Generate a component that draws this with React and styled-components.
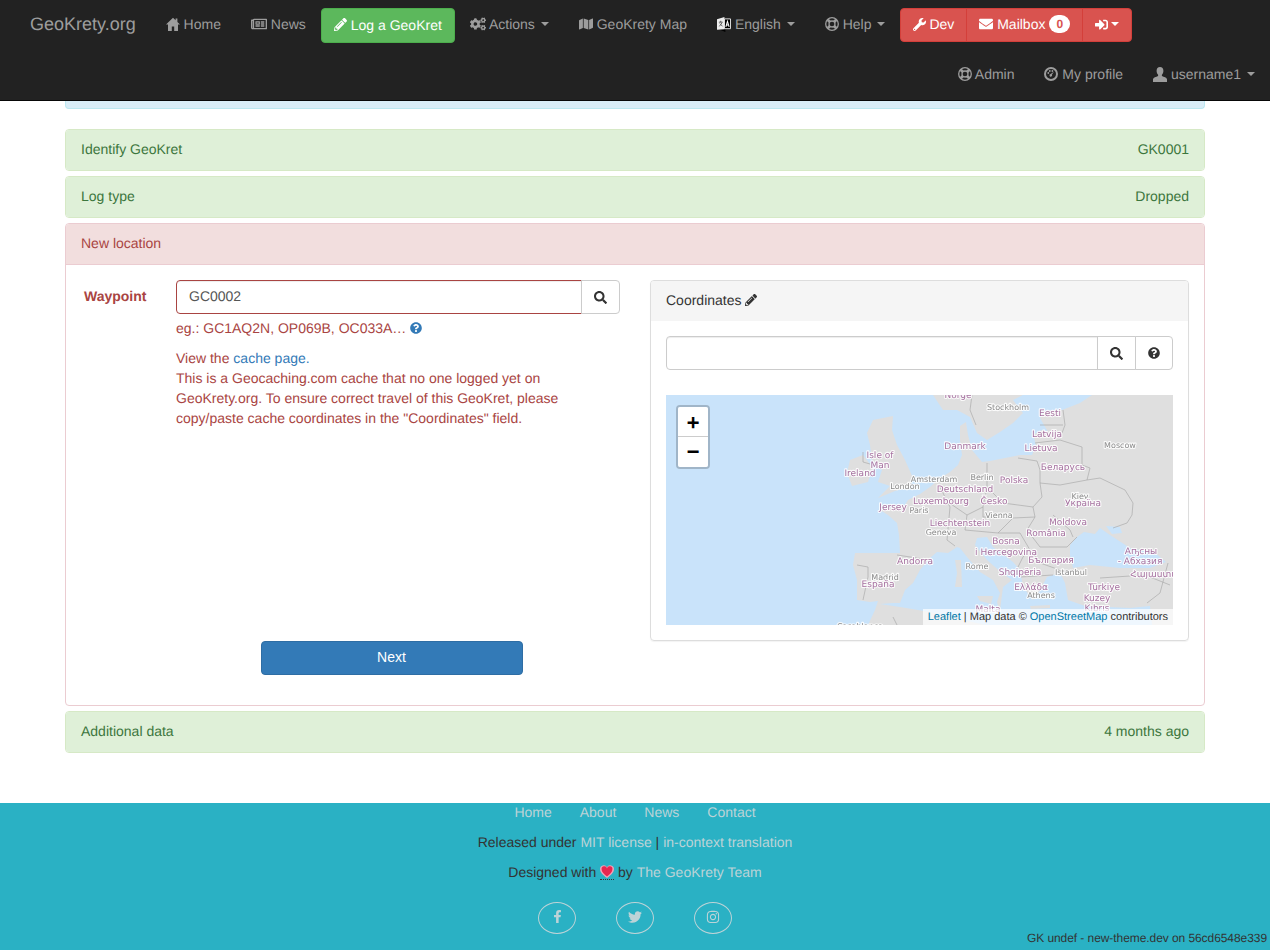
import React from 'react'
import styled, { createGlobalStyle } from 'styled-components'
import {
  FaRegNewspaper, FaPencilAlt, FaCogs, FaMap, FaWrench,
  FaEnvelope, FaSignInAlt, FaSearch, FaQuestionCircle, FaFacebookF, FaTwitter, FaInstagram,
} from 'react-icons/fa'

const GlobalStyle = createGlobalStyle`
  html, body { margin: 0; height: 950px; overflow: hidden; background: #fff; }
  body { font-family: "Liberation Sans", Arial, sans-serif; font-size: 14px; line-height: 20px; color: #333; text-rendering: geometricPrecision; }
  * { box-sizing: border-box; }
  a { text-decoration: none; }
`

const Page = styled.div`
  width: 1270px;
  height: 950px;
  display: flex;
  flex-direction: column;
  position: relative;
`

const Navbar = styled.nav`
  height: 101px;
  background: #222;
  border-bottom: 1px solid #080808;
  padding-left: 15px;
`

const NavRow = styled.div`
  height: 50px;
  display: flex;
  align-items: flex-start;
  justify-content: ${p => (p.$right ? 'flex-end' : 'flex-start')};
`

const Brand = styled.a`
  font-size: 18px;
  line-height: 20px;
  color: #9d9d9d;
  padding: 14px 15px 16px 15px;
`

const NavLink = styled.a`
  display: flex;
  align-items: center;
  height: 50px;
  padding: 0 15px 2px;
  color: #9d9d9d;
  white-space: pre;
  svg { flex: none; }
`

const LogButton = styled.a`
  display: flex;
  align-items: center;
  height: 35px;
  margin-top: 8px;
  padding: 0 12px 2px;
  color: #fff;
  background: #5cb85c;
  border: 1px solid #4cae4c;
  border-radius: 4px;
  white-space: pre;
`

const DevGroup = styled.div`
  display: flex;
  margin-top: 8px;
`

const DevButton = styled.a`
  display: flex;
  align-items: center;
  height: 34px;
  padding: 0 12px 2px;
  color: #fff;
  background: #d9534f;
  border: 1px solid #d43f3a;
  margin-left: -1px;
  white-space: pre;
  &:first-child { border-radius: 4px 0 0 4px; margin-left: 0; }
  &:last-child { border-radius: 0 4px 4px 0; }
`

const Badge = styled.span`
  min-width: 21px;
  height: 18px;
  margin-left: 4px;
  background: #fff;
  color: #d9534f;
  border-radius: 10px;
  font-size: 12px;
  font-weight: 700;
  line-height: 18px;
  text-align: center;
`

const Caret = styled.span`
  display: inline-block;
  width: 0;
  height: 0;
  margin-left: ${p => p.$gap ?? 6}px;
  border-top: 4px dashed currentColor;
  border-left: 4px solid transparent;
  border-right: 4px solid transparent;
`

const Container = styled.main`
  width: 1140px;
  margin: 0 auto 45px;
`

const ClippedPanel = styled.div`
  height: 8px;
  margin-bottom: 20px;
  background: #d9edf7;
  border: 1px solid #bce8f1;
  border-top: 0;
  border-radius: 0 0 4px 4px;
`

const Panel = styled.section`
  margin-bottom: 5px;
  border: 1px solid ${p => (p.$danger ? '#ebccd1' : '#d6e9c6')};
  border-radius: 4px;
  background: #fff;
  overflow: hidden;
`

const PanelHeading = styled.div`
  height: ${p => (p.$danger ? 41 : 40)}px;
  padding: 0 15px 2px;
  display: flex;
  align-items: center;
  justify-content: space-between;
  background: ${p => (p.$danger ? '#f2dede' : '#dff0d8')};
  color: ${p => (p.$danger ? '#a94442' : '#3c763d')};
  border-bottom: ${p => (p.$danger ? '1px solid #ebccd1' : '0')};
`

const PanelBody = styled.div`
  height: 440px;
  padding: 15px 15px 30px;
  display: grid;
  grid-template-columns: 539px 539px;
  gap: 30px;
`

const FormColumn = styled.div`
  display: flex;
  flex-direction: column;
  min-height: 395px;
`

const WaypointRow = styled.div`
  display: grid;
  grid-template-columns: 95px 444px;
`

const WaypointLabel = styled.label`
  color: #a94442;
  font-weight: 700;
  padding: 6px 0 0 3px;
`

const InputGroup = styled.div`
  display: flex;
  height: 34px;
`

const TextInput = styled.div`
  flex: 1;
  height: 34px;
  padding: 5px 12px;
  color: #555;
  background: #fff;
  border: 1px solid ${p => (p.$error ? '#a94442' : '#ccc')};
  border-radius: 4px 0 0 4px;
  box-shadow: inset 0 1px 1px rgba(0, 0, 0, .075);
`

const AddonButton = styled.button`
  width: ${p => p.$w}px;
  height: 34px;
  margin-left: -1px;
  padding: 0;
  display: flex;
  align-items: center;
  justify-content: center;
  color: #333;
  background: #fff;
  border: 1px solid #ccc;
  &:last-child { border-radius: 0 4px 4px 0; }
`

const HelpLine = styled.div`
  margin-top: 4px;
  color: #a94442;
  display: flex;
  align-items: center;
  white-space: pre;
  svg { color: #337ab7; margin-left: 4px; }
`

const Message = styled.p`
  margin: 10px 0 0;
  color: #a94442;
  a { color: #337ab7; }
`

const NextButton = styled.button`
  align-self: center;
  margin-top: auto;
  width: 262px;
  height: 34px;
  margin-left: 82px;
  padding: 0 0 2px;
  color: #fff;
  background: #337ab7;
  border: 1px solid #2e6da4;
  border-radius: 4px;
  font: inherit;
`

const CoordPanel = styled.div`
  height: 361px;
  border: 1px solid #ddd;
  border-radius: 4px;
  box-shadow: 0 1px 1px rgba(0, 0, 0, .05);
  overflow: hidden;
`

const CoordHeading = styled.div`
  height: 40px;
  padding: 0 15px 2px;
  display: flex;
  align-items: center;
  white-space: pre;
  background: #f5f5f5;
`

const CoordBody = styled.div`
  padding: 15px;
  display: flex;
  flex-direction: column;
  gap: 25px;
`

const MapFrame = styled.div`
  position: relative;
  height: 230px;
  overflow: hidden;
  background: #c9e3fa;
  svg.tiles { display: block; filter: blur(.3px); }
`

const ZoomControl = styled.div`
  position: absolute;
  left: 10px;
  top: 10px;
  width: 34px;
  border: 2px solid rgba(0, 0, 0, .2);
  border-radius: 4px;
  background-clip: padding-box;
`

const ZoomButton = styled.div`
  height: 30px;
  padding-top: ${p => (p.$top ? 7 : 4)}px;
  background: #fff;
  display: flex;
  align-items: center;
  justify-content: center;
  color: #000;
  font: 700 22px/26px "Liberation Mono", "Courier New", monospace;
  border-radius: ${p => (p.$top ? '2px 2px 0 0' : '0 0 2px 2px')};
  border-bottom: ${p => (p.$top ? '1px solid #ccc' : '0')};
`

const Attribution = styled.div`
  position: absolute;
  right: 0;
  bottom: 0;
  padding: 0 5px;
  background: rgba(255, 255, 255, .7);
  font-size: 11px;
  line-height: 16px;
  color: #333;
  a { color: #0078a8; }
`

const Footer = styled.footer`
  flex: 1;
  background: #2ab1c4;
  text-align: center;
  a { color: #bcd3d7; }
`

const FooterLinks = styled.div`
  height: 19px;
  display: flex;
  justify-content: center;
  gap: 28px;
  line-height: 18px;
`

const FooterLine = styled.div`
  height: 20px;
  margin-top: ${p => p.$top}px;
  white-space: pre;
  display: flex;
  justify-content: center;
  align-items: center;
`

const HeartMark = styled.span`
  display: inline-flex;
  height: 15px;
  align-items: center;
  border-bottom: 1px dotted #333;
`

const SocialRow = styled.div`
  display: flex;
  justify-content: center;
  gap: 40px;
  margin-top: 20px;
`

const SocialLink = styled.a`
  width: 38px;
  height: 32px;
  display: flex;
  align-items: center;
  justify-content: center;
  border: 1px solid #bcd3d7;
  border-radius: 50%;
  svg { margin-top: -3px; }
`

const BuildInfo = styled.div`
  position: absolute;
  right: 3px;
  bottom: 5px;
  font-size: 12px;
  line-height: 14px;
  letter-spacing: -.07px;
  color: #333;
`

// glyphicon look-alikes, react-icons has no such shapes
const HomeIcon = () => (
  <svg width="14" height="14" viewBox="0 0 14 14" fill="currentColor">
    <path d="M7 .8 0 7.600h2V14h3.800V9.600h2.400V14H12V7.600h2l-2.600-2.500V1.400H9.600v1.900z" />
  </svg>
)

const RingIcon = () => (
  <svg width="14" height="14" viewBox="0 0 14 14" fill="none" stroke="currentColor">
    <circle cx="7" cy="7" r="6.300" strokeWidth="1.300" />
    <circle cx="7" cy="7" r="3" strokeWidth="1.300" />
    <path strokeWidth="2.800" d="M2.700 2.700 5 5M11.300 2.700 9 5M2.700 11.300 5 9M11.300 11.300 9 9" />
  </svg>
)

const LanguageIcon = () => (
  <svg width="14" height="15" viewBox="0 0 15 16">
    <path fill="#000" d="M2 13h7v3z" />
    <path fill="#eee" d="M0 2.500 8 0v13l-8 .6z" />
    <path fill="none" stroke="#555" strokeWidth="1" d="M2 5.500h4M4 4v1.500M2.500 10 5.500 6M3 7l3 3" />
    <path fill="#000" stroke="#eee" d="M8 2h6.500v10.500H8z" />
    <path fill="none" stroke="#fff" strokeWidth="1.100" d="M9.500 10.500 11.200 4.500 13 10.500M10.200 8.500h2" />
  </svg>
)

const UserIcon = () => (
  <svg width="14" height="15" viewBox="0 0 14 15" fill="currentColor">
    <path d="M7 0C4.800 0 3.600 1.600 3.600 3.800c0 1.600.6 3 1.500 3.900v1.400C3 10 .4 10.600 0 12.200V15h14v-2.800c-.4-1.600-3-2.200-5.100-3.100V7.700c.9-.9 1.500-2.300 1.500-3.900C10.400 1.600 9.200 0 7 0z" />
  </svg>
)

const DashIcon = () => (
  <svg width="14" height="14" viewBox="0 0 14 14" fill="currentColor">
    <path fillRule="evenodd" d="M7 0a7 7 0 1 1 0 14A7 7 0 0 1 7 0zm0 2a5 5 0 1 0 0 10A5 5 0 0 0 7 2z" />
    <circle cx="4.300" cy="6" r=".9" /><circle cx="5.800" cy="4" r=".9" /><circle cx="8.400" cy="4" r=".9" />
    <path d="M9.900 4.800 7.900 7.700a1.300 1.300 0 1 1-1.300-.6z" />
  </svg>
)

const Heart = () => (
  <svg width="14" height="13" viewBox="0 0 14 13">
    <path fill="#f2a3b8" d="M7 13C3 10 0 7.500 0 4a3.700 3.700 0 0 1 7-1.700A3.700 3.700 0 0 1 14 4c0 3.500-3 6-7 9z" />
    <path fill="#e8264f" d="M7 11.500C4 9.200 1.600 7.200 1.600 4.300A2.600 2.600 0 0 1 7 3.600a2.600 2.600 0 0 1 5.400.7c0 2.900-2.400 4.900-5.400 7.200z" />
  </svg>
)

const landPaths = [
  // continent, seas are painted over it
  'M880 510L893 507 905 505 908 500 920 494 930 487 940 478 950 472 958 465 962 455 960 440 960 426 966 422 968 435 972 450 982 462 990 461 1005 458 1020 455 1032 455 1036 445 1033 435 1042 430 1048 432 1040 418 1045 411 1062 410 1080 403 1092 395 1173 395 1173 625 868 625 875 610 878 601 870 602 857 600 857 580 853 565 855 553 885 553 900 553 899 535 897 523 888 515Z',
  // Scandinavia
  'M933 395L943 410 957 410 970 417 977 433 987 440 1000 432 1013 423 1023 413 1013 400 1023 395Z',
  // Great Britain
  'M867 433L873 420 893 416 892 430 897 445 905 460 913 478 910 487 895 491 878 498 890 486 878 482 882 470 872 460 870 445Z',
  // Ireland
  'M850 460L863 455 873 468 868 482 852 486 847 473Z',
]

const seaPaths = [
  // western Mediterranean with Italy's west coast
  'M880 604L893 603 900 603 905 590 913 583 920 570 930 558 937 552 948 553 957 547 960 548 967 557 980 572 993 580 1000 593 997 602 1000 612 985 625 930 612 900 607Z',
  // Adriatic
  'M977 538L987 537 993 547 1013 562 1020 570 1023 587 1033 600 1040 590 1047 577 1060 573 1065 583 1068 600 1085 606 1130 608 1150 606 1152 625 985 625 1000 610 1003 587 1012 580 1002 573 987 560 975 545Z',
  // Black Sea
  'M1077 537L1084 532 1095 534 1100 528 1110 535 1130 548 1155 553 1166 562 1150 568 1120 568 1090 565 1073 568 1070 555 1070 545Z',
  // Azov
  'M1106 526L1120 527 1122 533 1112 534Z',
  // Gulf of Bothnia corner
  'M1023 395L1090 395 1076 402 1050 404 1034 404 1028 412 1018 399Z',
]

// islands sit on top of the seas
const islandPaths = [
  'M955 560L961 560 962 587 955 587 957 573Z',
  'M977 596L993 596 991 604 980 601Z',
  'M1030 606L1050 605 1050 608 1031 609Z',
]

const borders = [
  '1063 410 1065 425 1062 433', '1040 425 1063 425', '1035 443 1060 440 1082 447 1082 465 1090 468 1087 480',
  '1040 483 1060 485 1087 480 1100 478 1125 490 1133 503 1132 515 1127 523 1113 528',
  '1018 458 1037 461 1040 470 1040 483 1042 497 1033 507', '987 463 987 487 1003 503 1033 507',
  '983 507 967 515', '987 487 983 507 983 517 1013 518 1035 517 1033 507', '1035 517 1027 530 1040 547 1067 547 1077 537',
  '1053 515 1070 530 1073 537', '940 487 950 507 947 540 955 546', '897 555 930 560', '857 565 868 567 868 577 863 600',
  '863 452 863 462 870 464', '893 617 897 625', '972 395 970 410 976 425', '998 533 1020 533 1030 550 1023 557 1018 567',
  '1020 577 1053 575', '1060 570 1040 563 1030 550', '1160 593 1147 603', '1168 563 1160 593', '965 530 998 533 1013 518',
  '1100 578 1145 575 1170 585', '945 500 967 515 965 530',
]

const countries = [
  ['Norge', 958, 396], ['Eesti', 1050, 414], ['Latvija', 1047, 435], ['Lietuva', 1041, 449], ['Danmark', 965, 447],
  ['Беларусь', 1063, 468], ['Polska', 1014, 481], ['Deutschland', 965, 490], ['Česko', 994, 502], ['Luxembourg', 941, 502],
  ['Україна', 1083, 504], ['Moldova', 1068, 523], ['România', 1046, 534], ['Liechtenstein', 960, 524], ['Bosna', 1006, 542],
  ['i Hercegovina', 1006, 553], ['България', 1051, 561], ['Shqipëria', 1020, 573], ['Ελλάδα', 1031, 588], ['Türkiye', 1104, 588],
  ['Kuzey', 1097, 599], ['Kıbrıs', 1097, 609], ['Malta', 988, 610], ['Аҧсны', 1141, 552], ['- Абхазия', 1140, 562],
  ['Հայաստան', 1158, 575], ['Andorra', 915, 562], ['Isle of', 880, 456], ['Man', 880, 466], ['Ireland', 860, 474],
  ['Jersey', 893, 508], ['España', 878, 585],
]

const cities = [
  ['Stockholm', 1008, 407], ['Moscow', 1120, 445], ['Berlin', 982, 477], ['Amsterdam', 934, 479], ['London', 905, 486],
  ['Paris', 919, 510], ['Kiev', 1080, 496], ['Vienna', 999, 515], ['Geneva', 941, 532], ['Rome', 977, 566],
  ['Istanbul', 1071, 572], ['Athens', 1041, 595], ['Madrid', 885, 577], ['Casablanca', 860, 626],
]

const MapTiles = () => (
  <svg className="tiles" width="507" height="230" viewBox="666 395 507 230">
    {landPaths.map(d => <path key={d} d={d} fill="#dfdfdf" />)}
    {seaPaths.map(d => <path key={d} d={d} fill="#c9e3fa" />)}
    {islandPaths.map(d => <path key={d} d={d} fill="#dfdfdf" />)}
    {borders.map(p => <polyline key={p} points={p} fill="none" stroke="#a2a2a2" strokeWidth=".6" />)}
    <g fontFamily="'DejaVu Sans', sans-serif" textAnchor="middle" dominantBaseline="central" stroke="#fff" strokeWidth="2.200" strokeOpacity=".85" paintOrder="stroke" strokeLinejoin="round">
      {cities.map(([t, x, y]) => <text key={t} x={x} y={y} fontSize="8" fill="#8a8a8a">{t}</text>)}
      {countries.map(([t, x, y]) => <text key={t} x={x} y={y} fontSize="9" fill="#a5709f">{t}</text>)}
    </g>
  </svg>
)

export default function App() {
  return (
    <Page>
      <GlobalStyle />
      <Navbar>
        <NavRow>
          <Brand href="#">GeoKrety.org</Brand>
          <NavLink href="#"><HomeIcon /> Home</NavLink>
          <NavLink href="#"><FaRegNewspaper size={16} /> News</NavLink>
          <LogButton href="#"><FaPencilAlt size={13} /> Log a GeoKret</LogButton>
          <NavLink href="#"><FaCogs size={16} /> Actions<Caret /></NavLink>
          <NavLink href="#"><FaMap size={14} /> GeoKrety Map</NavLink>
          <NavLink href="#"><LanguageIcon /> English<Caret /></NavLink>
          <NavLink href="#"><RingIcon /> Help<Caret $gap={5} /></NavLink>
          <DevGroup>
            <DevButton href="#"><FaWrench size={13} /> Dev</DevButton>
            <DevButton href="#"><FaEnvelope size={14} /> Mailbox<Badge>0</Badge></DevButton>
            <DevButton href="#"><FaSignInAlt size={13} /><Caret $gap={3} /></DevButton>
          </DevGroup>
        </NavRow>
        <NavRow $right>
          <NavLink href="#"><RingIcon /> Admin</NavLink>
          <NavLink href="#"><DashIcon /> My profile</NavLink>
          <NavLink href="#"><UserIcon /> username1<Caret /></NavLink>
        </NavRow>
      </Navbar>

      <Container>
        <ClippedPanel />
        <Panel>
          <PanelHeading><span>Identify GeoKret</span><span>GK0001</span></PanelHeading>
        </Panel>
        <Panel>
          <PanelHeading><span>Log type</span><span>Dropped</span></PanelHeading>
        </Panel>
        <Panel $danger>
          <PanelHeading $danger><span>New location</span></PanelHeading>
          <PanelBody>
            <FormColumn>
              <WaypointRow>
                <WaypointLabel>Waypoint</WaypointLabel>
                <div>
                  <InputGroup>
                    <TextInput $error>GC0002</TextInput>
                    <AddonButton $w={39}><FaSearch size={13} /></AddonButton>
                  </InputGroup>
                  <HelpLine>eg.: GC1AQ2N, OP069B, OC033A…<FaQuestionCircle size={12} /></HelpLine>
                  <Message>
                    View the <a href="#">cache page.</a><br />
                    This is a Geocaching.com cache that no one logged yet on GeoKrety.org. To ensure correct travel of this GeoKret, please copy/paste cache coordinates in the "Coordinates" field.
                  </Message>
                </div>
              </WaypointRow>
              <NextButton>Next</NextButton>
            </FormColumn>
            <CoordPanel>
              <CoordHeading>Coordinates <FaPencilAlt size={12} /></CoordHeading>
              <CoordBody>
                <InputGroup>
                  <TextInput />
                  <AddonButton $w={39}><FaSearch size={13} /></AddonButton>
                  <AddonButton $w={38}><FaQuestionCircle size={12} /></AddonButton>
                </InputGroup>
                <MapFrame>
                  <MapTiles />
                  <ZoomControl>
                    <ZoomButton $top>+</ZoomButton>
                    <ZoomButton>−</ZoomButton>
                  </ZoomControl>
                  <Attribution><a href="#">Leaflet</a> | Map data © <a href="#">OpenStreetMap</a> contributors</Attribution>
                </MapFrame>
              </CoordBody>
            </CoordPanel>
          </PanelBody>
        </Panel>
        <Panel>
          <PanelHeading><span>Additional data</span><span>4 months ago</span></PanelHeading>
        </Panel>
      </Container>

      <Footer>
        <FooterLinks>
          <a href="#">Home</a><a href="#">About</a><a href="#">News</a><a href="#">Contact</a>
        </FooterLinks>
        <FooterLine $top={10}>Released under <a href="#">MIT license</a> | <a href="#">in-context translation</a></FooterLine>
        <FooterLine $top={10}>Designed with <HeartMark><Heart /></HeartMark> by <a href="#">The GeoKrety Team</a></FooterLine>
        <SocialRow>
          <SocialLink href="#"><FaFacebookF size={13} /></SocialLink>
          <SocialLink href="#"><FaTwitter size={14} /></SocialLink>
          <SocialLink href="#"><FaInstagram size={14} /></SocialLink>
        </SocialRow>
      </Footer>
      <BuildInfo>GK undef - new-theme.dev on 56cd6548e339</BuildInfo>
    </Page>
  )
}
